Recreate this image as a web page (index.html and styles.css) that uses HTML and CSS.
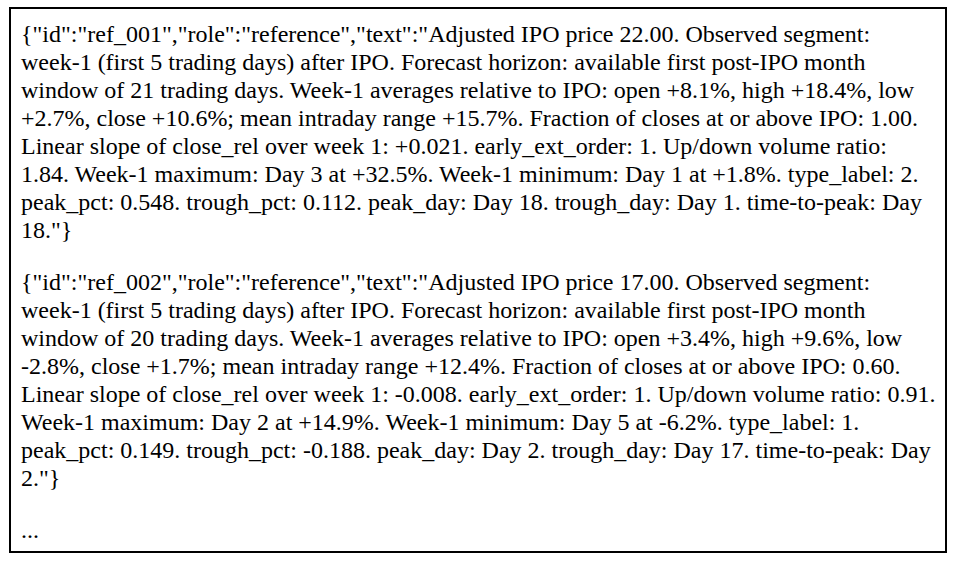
FILE: index.html
```html
<!DOCTYPE html>
<html>
<head>
<meta charset="utf-8">
<link rel="stylesheet" href="styles.css">
</head>
<body>
<div class="box">
<p class="entry">{"id":"ref_001","role":"reference","text":"Adjusted IPO price 22.00. Observed segment:<br>
week-1 (first 5 trading days) after IPO. Forecast horizon: available first post-IPO month<br>
window of 21 trading days. Week-1 averages relative to IPO: open +8.1%, high +18.4%, low<br>
+2.7%, close +10.6%; mean intraday range +15.7%. Fraction of closes at or above IPO: 1.00.<br>
Linear slope of close_rel over week 1: +0.021. early_ext_order: 1. Up/down volume ratio:<br>
1.84. Week-1 maximum: Day 3 at +32.5%. Week-1 minimum: Day 1 at +1.8%. type_label: 2.<br>
peak_pct: 0.548. trough_pct: 0.112. peak_day: Day 18. trough_day: Day 1. time-to-peak: Day<br>
18."}</p>
<p class="entry">{"id":"ref_002","role":"reference","text":"Adjusted IPO price 17.00. Observed segment:<br>
week-1 (first 5 trading days) after IPO. Forecast horizon: available first post-IPO month<br>
window of 20 trading days. Week-1 averages relative to IPO: open +3.4%, high +9.6%, low<br>
-2.8%, close +1.7%; mean intraday range +12.4%. Fraction of closes at or above IPO: 0.60.<br>
Linear slope of close_rel over week 1: -0.008. early_ext_order: 1. Up/down volume ratio: 0.91.<br>
Week-1 maximum: Day 2 at +14.9%. Week-1 minimum: Day 5 at -6.2%. type_label: 1.<br>
peak_pct: 0.149. trough_pct: -0.188. peak_day: Day 2. trough_day: Day 17. time-to-peak: Day<br>
2."}</p>
<p class="entry more">...</p>
</div>
</body>
</html>
```

FILE: styles.css
```css
html, body {
  margin: 0;
  padding: 0;
  background: #ffffff;
}
body {
  padding: 7px 0 0 9px;
}
.box {
  box-sizing: border-box;
  width: 938px;
  height: 546px;
  border: 2px solid #000000;
  padding: 11px 10px 9px 10px;
  font-family: "Liberation Serif", "Times New Roman", serif;
  font-size: 24px;
  line-height: 28px;
  color: #000000;
}
.entry {
  margin: 0 0 24px 0;
  white-space: nowrap;
}
.more {
  margin: 0;
}
```
